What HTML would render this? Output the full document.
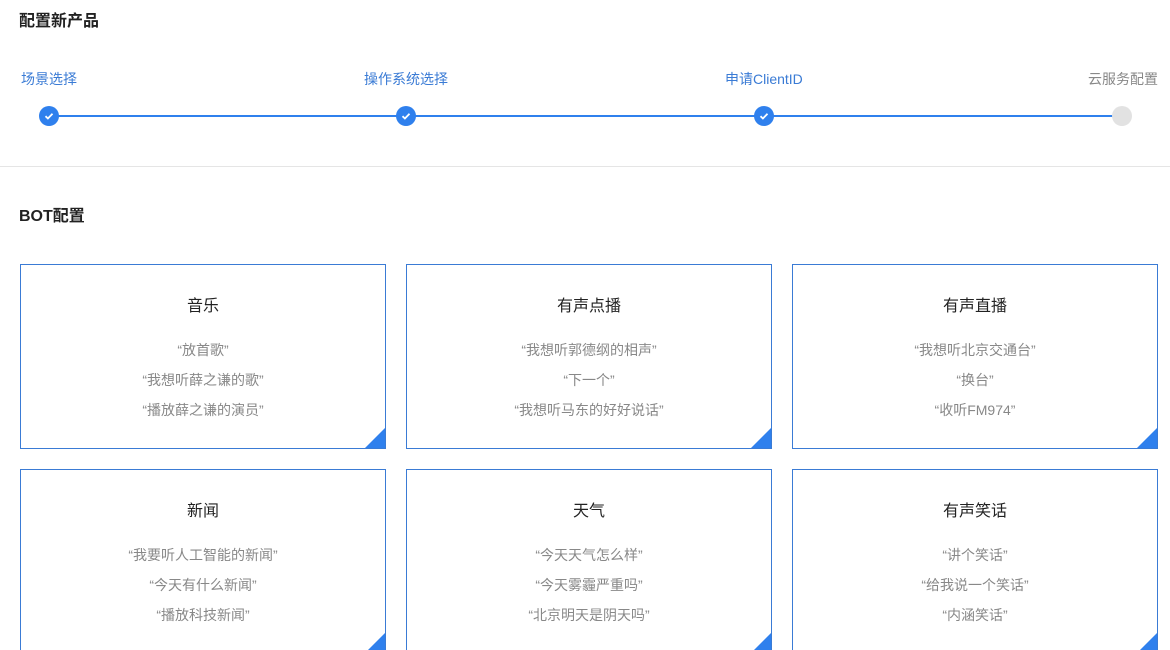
<!DOCTYPE html>
<html><head><meta charset="utf-8"><style>
*{margin:0;padding:0;box-sizing:border-box}
html,body{width:1170px;height:650px;overflow:hidden}
body{background:#fff;font-family:"Liberation Sans","Noto Sans CJK SC",sans-serif;position:relative}
.h{position:absolute;left:19px;font-size:16px;font-weight:bold;color:#222;line-height:20px}
.lbl{position:absolute;top:70px;font-size:14px;color:#3a7bd5;line-height:18px;white-space:nowrap}
.dot{position:absolute;top:106px;width:20px;height:20px;border-radius:50%;background:#2f80ed}
.dot svg{position:absolute;left:4px;top:4px}
.card{position:absolute;width:366px;height:185px;border:1px solid #3a7bd5;text-align:center;overflow:hidden}
.card .t{margin-top:32px;font-size:16px;color:#222;line-height:20px}
.card .l{font-size:14px;color:#888;line-height:30px}
.card .t+.l{margin-top:18px}
.card:after{content:"";position:absolute;right:0;bottom:0;border-style:solid;border-width:0 0 20px 20px;border-color:transparent transparent #2f80ed transparent}
</style></head><body>
<div class="h" style="top:12px">配置新产品</div>
<div style="position:absolute;left:49px;top:115px;width:1073px;height:2px;background:#2f80ed"></div>
<div class="lbl" style="left:21px">场景选择</div>
<div class="lbl" style="left:364px">操作系统选择</div>
<div class="lbl" style="left:725px">申请ClientID</div>
<div class="lbl" style="left:1088px;color:#888">云服务配置</div>
<div class="dot" style="left:39px"><svg width="12" height="12" viewBox="0 0 12 12"><path d="M2.5 6.2l2.4 2.3 4.6-4.8" stroke="#fff" stroke-width="1.8" fill="none"/></svg></div>
<div class="dot" style="left:396px"><svg width="12" height="12" viewBox="0 0 12 12"><path d="M2.5 6.2l2.4 2.3 4.6-4.8" stroke="#fff" stroke-width="1.8" fill="none"/></svg></div>
<div class="dot" style="left:754px"><svg width="12" height="12" viewBox="0 0 12 12"><path d="M2.5 6.2l2.4 2.3 4.6-4.8" stroke="#fff" stroke-width="1.8" fill="none"/></svg></div>
<div class="dot" style="left:1112px;background:#e2e2e2"></div>
<div style="position:absolute;left:0;top:166px;width:1170px;height:1px;background:#e5e5e5"></div>
<div class="h" style="top:207px">BOT配置</div>
<div class="card" style="left:20px;top:264px"><div class="t">音乐</div><div class="l">“放首歌”</div><div class="l">“我想听薛之谦的歌”</div><div class="l">“播放薛之谦的演员”</div></div>
<div class="card" style="left:406px;top:264px"><div class="t">有声点播</div><div class="l">“我想听郭德纲的相声”</div><div class="l">“下一个”</div><div class="l">“我想听马东的好好说话”</div></div>
<div class="card" style="left:792px;top:264px"><div class="t">有声直播</div><div class="l">“我想听北京交通台”</div><div class="l">“换台”</div><div class="l">“收听FM974”</div></div>
<div class="card" style="left:20px;top:469px"><div class="t">新闻</div><div class="l">“我要听人工智能的新闻”</div><div class="l">“今天有什么新闻”</div><div class="l">“播放科技新闻”</div></div>
<div class="card" style="left:406px;top:469px"><div class="t">天气</div><div class="l">“今天天气怎么样”</div><div class="l">“今天雾霾严重吗”</div><div class="l">“北京明天是阴天吗”</div></div>
<div class="card" style="left:792px;top:469px"><div class="t">有声笑话</div><div class="l">“讲个笑话”</div><div class="l">“给我说一个笑话”</div><div class="l">“内涵笑话”</div></div>
</body></html>
